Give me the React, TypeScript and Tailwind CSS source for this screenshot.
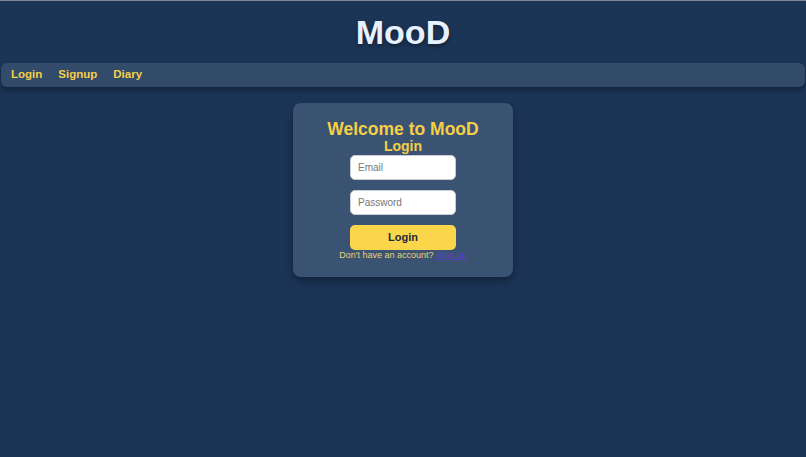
export default function App() {
  return (
    <div className="min-h-[457px] bg-[#1c3557] font-['Liberation_Sans',Arial,sans-serif] border-t border-[#7d8592]">
      <header className="flex h-[62px] items-center justify-center">
        <h1 className="text-[34px] font-bold leading-none text-[#e8f1ff] [text-shadow:0_2px_4px_rgba(0,0,0,0.45)]">
          MooD
        </h1>
      </header>
      <nav className="mx-[1px] flex h-[24px] items-center gap-[16px] rounded-[6px] bg-[#324b6a] px-[10px] shadow-[0_3px_6px_rgba(0,0,0,0.35)]">
        {["Login", "Signup", "Diary"].map((label) => (
          <a key={label} className="text-[11.5px] font-bold text-[#f5cf45]">
            {label}
          </a>
        ))}
      </nav>
      <main className="flex justify-center pt-[16px]">
        <section className="flex w-[220px] flex-col items-center rounded-[8px] bg-[#3b5372] pb-[16px] pt-[17px] shadow-[0_4px_10px_rgba(0,0,0,0.35)]">
          <h2 className="text-[17.5px] font-bold leading-[19px] text-[#f5cf45]">Welcome to MooD</h2>
          <h3 className="text-[14px] font-bold leading-[15px] text-[#f5cf45]">Login</h3>
          <form className="mt-[1px] flex w-[106px] flex-col gap-[10px]">
            <input
              placeholder="Email"
              className="h-[25px] rounded-[5px] border border-[#c9cdd3] bg-white px-[7px] text-[10px] text-gray-800 placeholder:text-[#777]"
            />
            <input
              type="password"
              placeholder="Password"
              className="h-[25px] rounded-[5px] border border-[#c9cdd3] bg-white px-[7px] text-[10px] text-gray-800 placeholder:text-[#777]"
            />
            <button
              type="button"
              className="h-[25px] rounded-[5px] bg-[#fcd64a] text-[11px] font-bold text-[#1f2937]"
            >
              Login
            </button>
          </form>
          <p className="text-[9px] leading-[11px] text-[#e9d27a]">
            Don't have an account?{" "}
            <a className="text-[#5b3fc4] underline">Sign up</a>
          </p>
        </section>
      </main>
    </div>
  );
}
